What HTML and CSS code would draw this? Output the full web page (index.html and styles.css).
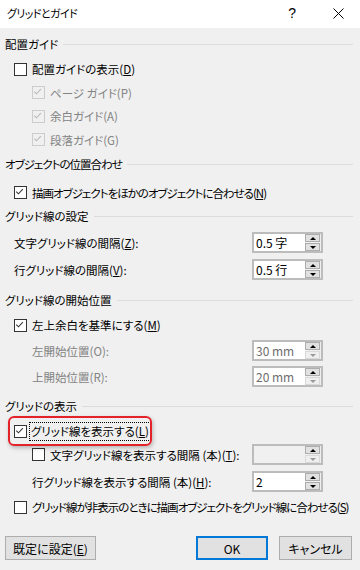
FILE: index.html
```html
<!DOCTYPE html>
<html lang="ja">
<head>
    <meta charset="UTF-8">
    <meta name="viewport" content="width=device-width, initial-scale=1.0">
    <title>グリッドとガイド</title>
    <link rel="stylesheet" href="styles.css">
</head>
<body>
    <div class="dialog">
        <div class="titlebar">
            <span class="title">グリッドとガイド</span>
            <span class="help">?</span>
            <svg class="close" viewBox="0 0 11 11"><path d="M0.5 0.5L10.5 10.5M10.5 0.5L0.5 10.5"/></svg>
        </div>
        <div class="content">
            <div class="group-head">配置ガイド</div>
            <div class="row mt3 h24">
                <span class="box"></span><span class="label">配置ガイドの表示(<u>D</u>)</span>
            </div>
            <div class="row sub h23 disabled">
                <span class="box checked"><svg viewBox="0 0 13 13"><path d="M2.5 6.5l2.6 2.6 5.2-5.6"/></svg></span><span class="label">ページ ガイド(P)</span>
            </div>
            <div class="row sub h24 disabled">
                <span class="box checked"><svg viewBox="0 0 13 13"><path d="M2.5 6.5l2.6 2.6 5.2-5.6"/></svg></span><span class="label">余白ガイド(A)</span>
            </div>
            <div class="row sub h23 disabled">
                <span class="box checked"><svg viewBox="0 0 13 13"><path d="M2.5 6.5l2.6 2.6 5.2-5.6"/></svg></span><span class="label">段落ガイド(G)</span>
            </div>

            <div class="group-head mt3 tight">オブジェクトの位置合わせ</div>
            <div class="row mt7 h23">
                <span class="box checked"><svg viewBox="0 0 13 13"><path d="M2.5 6.5l2.6 2.6 5.2-5.6"/></svg></span><span class="label tight">描画オブジェクトをほかのオブジェクトに合わせる(<u>N</u>)</span>
            </div>

            <div class="group-head mt2">グリッド線の設定</div>
            <div class="field mt6">
                <span class="label">文字グリッド線の間隔(<u>Z</u>):</span>
                <div class="spin">
                    <span class="value">0.5 字</span>
                    <span class="arrows"><span class="up"></span><span class="down"></span></span>
                </div>
            </div>
            <div class="field mt6">
                <span class="label">行グリッド線の間隔(<u>V</u>):</span>
                <div class="spin">
                    <span class="value">0.5 行</span>
                    <span class="arrows"><span class="up"></span><span class="down"></span></span>
                </div>
            </div>

            <div class="group-head mt10">グリッド線の開始位置</div>
            <div class="row mt3 h24">
                <span class="box checked"><svg viewBox="0 0 13 13"><path d="M2.5 6.5l2.6 2.6 5.2-5.6"/></svg></span><span class="label">左上余白を基準にする(<u>M</u>)</span>
            </div>
            <div class="field sub mt3 disabled">
                <span class="label">左開始位置(O):</span>
                <div class="spin">
                    <span class="value">30 mm</span>
                    <span class="arrows"><span class="up"></span><span class="down off"></span></span>
                </div>
            </div>
            <div class="field sub mt5 disabled">
                <span class="label">上開始位置(R):</span>
                <div class="spin">
                    <span class="value">20 mm</span>
                    <span class="arrows"><span class="up"></span><span class="down off"></span></span>
                </div>
            </div>

            <div class="group-head mt9">グリッドの表示</div>
            <div class="row mt3 h24 highlighted">
                <span class="box checked"><svg viewBox="0 0 13 13"><path d="M2.5 6.5l2.6 2.6 5.2-5.6"/></svg></span><span class="label focus">グリッド線を表示する(<u>L</u>)</span>
            </div>
            <div class="field sub mt1">
                <span class="check-label"><span class="box"></span><span class="label">文字グリッド線を表示する間隔 (本)(<u>T</u>):</span></span>
                <div class="spin blank">
                    <span class="value"></span>
                    <span class="arrows"><span class="up"></span><span class="down off"></span></span>
                </div>
            </div>
            <div class="field sub mt6">
                <span class="label">行グリッド線を表示する間隔 (本)(<u>H</u>):</span>
                <div class="spin">
                    <span class="value">2</span>
                    <span class="arrows"><span class="up"></span><span class="down"></span></span>
                </div>
            </div>
            <div class="row mt4 h22">
                <span class="box"></span><span class="label tight">グリッド線が非表示のときに描画オブジェクトをグリッド線に合わせる(<u>S</u>)</span>
            </div>

            <div class="buttons">
                <button class="btn default-set">既定に設定(<u>E</u>)</button>
                <div class="btn-group">
                    <button class="btn ok">OK</button>
                    <button class="btn cancel">キャンセル</button>
                </div>
            </div>
        </div>
    </div>
</body>
</html>
```

FILE: styles.css
```css
body {
    margin: 0;
    background-color: #f0f0f0;
    font-family: "Noto Sans CJK JP", "Noto Sans", sans-serif;
    font-size: 11.5px;
    font-feature-settings: "palt";
    color: #000;
}
.dialog {
    width: 360px;
    height: 570px;
    background-color: #f0f0f0;
    overflow: hidden;
}
.titlebar {
    height: 28px;
    background-color: #fff;
    display: flex;
    align-items: center;
    padding-left: 7px;
}
.title {
    font-size: 11px;
    letter-spacing: -0.6px;
    margin-top: -2px;
}
.help {
    margin-left: auto;
    font-family: "Liberation Sans", sans-serif;
    font-size: 14px;
    margin-top: -2px;
}
.close {
    width: 11px;
    height: 11px;
    margin-left: 37px;
    margin-right: 16px;
    margin-top: -2px;
}
.close path {
    stroke: #000;
    stroke-width: 1;
    fill: none;
}
.content {
    padding-top: 6px;
}
.group-head {
    height: 20px;
    display: flex;
    align-items: center;
    padding-left: 5px;
    padding-right: 7px;
}
.group-head::after {
    content: "";
    flex: 1;
    height: 1px;
    background-color: #dcdcdc;
    margin-left: 5px;
}
.tight {
    letter-spacing: -1px;
}
.mt1 { margin-top: 1px; }
.mt2 { margin-top: 2px; }
.mt3 { margin-top: 3px; }
.mt4 { margin-top: 4px; }
.mt5 { margin-top: 5px; }
.mt6 { margin-top: 6px; }
.mt7 { margin-top: 7px; }
.mt9 { margin-top: 9px; }
.mt10 { margin-top: 10px; }
.h22 { height: 22px; }
.h23 { height: 23px; }
.h24 { height: 24px; }
.row {
    display: flex;
    align-items: center;
    padding-left: 14px;
    position: relative;
}
.row.sub {
    padding-left: 32px;
}
.box {
    width: 13px;
    height: 13px;
    box-sizing: border-box;
    border: 1px solid #333;
    background-color: #fff;
    flex-shrink: 0;
    display: flex;
}
.box svg {
    width: 11px;
    height: 11px;
}
.box svg path {
    fill: none;
    stroke: #333;
    stroke-width: 1.2;
    transform: translate(-1px, -1px);
}
.label {
    margin-left: 5px;
    white-space: nowrap;
}
.field > .label {
    margin-left: 0;
}
.disabled .label {
    color: #838383;
}
.disabled .box {
    border-color: #cccccc;
    background-color: #f0f0f0;
}
.disabled .box svg path {
    stroke: #b8b8b8;
}
.check-label {
    display: flex;
    align-items: center;
}
.highlighted::after {
    content: "";
    position: absolute;
    left: 8px;
    top: -3px;
    width: 144px;
    height: 30px;
    box-sizing: border-box;
    border: 2px solid #e5222a;
    border-radius: 6px;
    box-shadow: 1px 2px 4px rgba(0, 0, 0, 0.25);
}
.focus {
    outline: 1px dotted #000;
    outline-offset: 0;
    padding: 0 1px;
    margin-left: 3px;
    line-height: 17px;
}
.field {
    height: 21px;
    display: flex;
    align-items: center;
    justify-content: space-between;
    padding-left: 14px;
    padding-right: 37px;
}
.field.sub {
    padding-left: 32px;
}
.spin {
    width: 71px;
    height: 21px;
    box-sizing: border-box;
    border: 2px solid #bcbcbc;
    background-color: #fff;
    display: flex;
}
.spin.blank {
    background-color: #f0f0f0;
}
.spin .value {
    flex: 1;
    padding-left: 2px;
    line-height: 17px;
    font-size: 12px;
}
.disabled .spin .value {
    color: #6d6d6d;
}
.arrows {
    width: 15px;
    display: flex;
    flex-direction: column;
    gap: 1px;
    padding: 0 1px 0 0;
    background-color: #f0f0f0;
}
.arrows span {
    flex: 1;
    background-color: #e1e1e1;
    border: 1px solid #adadad;
    display: flex;
    align-items: center;
    justify-content: center;
}
.arrows .up::before {
    content: "";
    border-left: 3px solid transparent;
    border-right: 3px solid transparent;
    border-bottom: 3px solid #000;
}
.arrows .down::before {
    content: "";
    border-left: 3px solid transparent;
    border-right: 3px solid transparent;
    border-top: 3px solid #000;
}
.arrows .down.off {
    background-color: #efefef;
    border-color: #d9d9d9;
}
.arrows .down.off::before {
    border-top-color: #9a9a9a;
}
.buttons {
    margin-top: 18px;
    display: flex;
    justify-content: space-between;
    padding-left: 5px;
    padding-right: 8px;
}
.btn-group {
    display: flex;
    gap: 11px;
}
.btn {
    height: 24px;
    box-sizing: border-box;
    background-color: #e1e1e1;
    border: 1px solid #adadad;
    font-family: inherit;
    font-size: 12px;
    font-feature-settings: "palt";
    color: #000;
    padding: 0;
}
.default-set {
    width: 91px;
}
.ok {
    width: 72px;
    border: 2px solid #0078d7;
}
.cancel {
    width: 73px;
}
```
